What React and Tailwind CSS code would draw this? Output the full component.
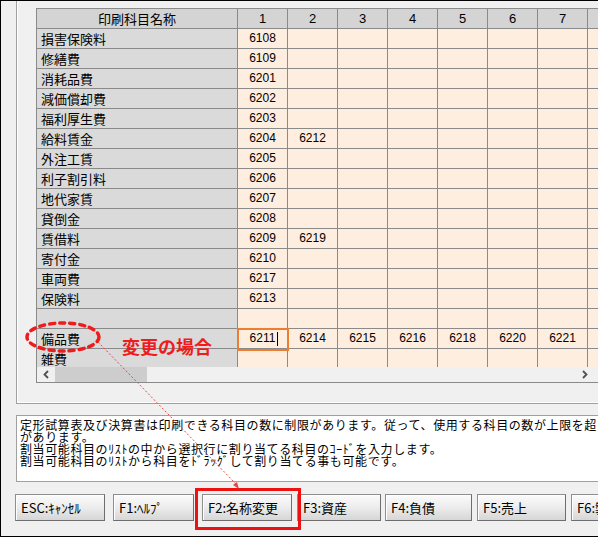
import React from "react";

const JP = { fontFamily: '"Noto Sans CJK JP", "Liberation Sans", sans-serif' };
const NUM = { fontFamily: '"Liberation Sans", "Noto Sans CJK JP", sans-serif' };

const rows = [
  ["損害保険料", ["6108"]],
  ["修繕費", ["6109"]],
  ["消耗品費", ["6201"]],
  ["減価償却費", ["6202"]],
  ["福利厚生費", ["6203"]],
  ["給料賃金", ["6204", "6212"]],
  ["外注工賃", ["6205"]],
  ["利子割引料", ["6206"]],
  ["地代家賃", ["6207"]],
  ["貸倒金", ["6208"]],
  ["賃借料", ["6209", "6219"]],
  ["寄付金", ["6210"]],
  ["車両費", ["6217"]],
  ["保険料", ["6213"]],
  ["", []],
  ["備品費", ["6211", "6214", "6215", "6216", "6218", "6220", "6221"]],
  ["雑費", []],
];

const COLS = 8;

function Row({ name, codes }) {
  return (
    <div className="flex h-[20px] shrink-0">
      <div
        className="w-[201px] shrink-0 h-full bg-[#dadada] border-r border-b border-[#8a8a8a] pl-[4px] text-[13px] leading-[20px] text-black"
        style={JP}
      >
        {name}
      </div>
      {Array.from({ length: COLS }).map((_, i) => (
        <div
          key={i}
          className="w-[50px] shrink-0 h-full bg-[#fdeee0] border-r border-b border-[#8a8a8a] text-center text-[12px] leading-[19px] text-black"
          style={NUM}
        >
          {codes[i] || ""}
        </div>
      ))}
    </div>
  );
}

function Btn({ label, w, ml }) {
  return (
    <div
      className="shrink-0 h-[27px] border border-[#8e8e8e] border-r-[#6e6e6e] border-b-[#6e6e6e] bg-gradient-to-b from-[#fbfbfb] via-[#ececec] to-[#d6d6d6] pl-[5px] text-[13px] leading-[25px] text-black whitespace-nowrap overflow-hidden shadow-[inset_1px_1px_0_#ffffff]"
      style={{ ...JP, width: w, marginLeft: ml }}
    >
      {label}
    </div>
  );
}

export default function App() {
  return (
    <div className="relative w-[598px] h-[537px] bg-[#f0f0f0] border-t border-l border-b border-black overflow-hidden flex flex-col">
      {/* group panel */}
      <div className="ml-[15px] h-[403px] shrink-0 border-l border-b border-[#a0a0a0]">
        <div className="h-full border-l border-b border-white pl-[18px] pt-[7px]">
          {/* grid */}
          <div className="w-[570px] h-[375px] border-l border-t border-b border-[#8a8a8a] bg-[#f0f0f0] flex flex-col overflow-hidden">
            <div className="h-[358px] overflow-hidden flex flex-col">
              <div className="flex h-[20px] shrink-0">
                <div
                  className="w-[201px] shrink-0 h-full bg-[#d4d4d4] border-r border-b border-[#8a8a8a] text-center text-[13px] leading-[19px] text-black"
                  style={JP}
                >
                  印刷科目名称
                </div>
                {Array.from({ length: COLS }).map((_, i) => (
                  <div
                    key={i}
                    className="w-[50px] shrink-0 h-full bg-[#d4d4d4] border-r border-b border-[#8a8a8a] text-center text-[13px] leading-[19px] text-black"
                    style={NUM}
                  >
                    {i < 7 ? i + 1 : ""}
                  </div>
                ))}
              </div>
              {rows.map(([n, c], i) => (
                <Row key={i} name={n} codes={c} />
              ))}
            </div>
            {/* horizontal scrollbar */}
            <div className="h-[15px] shrink-0 bg-[#f0f0f0] flex items-center relative">
              <div className="w-[17px] shrink-0 flex items-center justify-center">
                <svg width="8" height="9" viewBox="0 0 8 9">
                  <path d="M6 1 L2.5 4.5 L6 8" fill="none" stroke="#505050" strokeWidth="1.8" />
                </svg>
              </div>
              <div className="ml-[1px] w-[92px] h-[15px] bg-[#cdcdcd]" />
              <div className="absolute left-[544px] top-[3px] flex items-center">
                <svg width="8" height="9" viewBox="0 0 8 9">
                  <path d="M2 1 L5.5 4.5 L2 8" fill="none" stroke="#505050" strokeWidth="1.8" />
                </svg>
              </div>
            </div>
          </div>
        </div>
      </div>

      {/* message box */}
      <div className="ml-[15px] mt-[11px] h-[67px] shrink-0 border border-[#a0a0a0] border-r-0 bg-white pl-[3px] pt-[3px] overflow-hidden">
        <div className="text-[12px] tracking-[0.6px] leading-[12px] text-black whitespace-nowrap" style={JP}>
          <div>定形試算表及び決算書は印刷できる科目の数に制限があります。従って、使用する科目の数が上限を超える場合</div>
          <div>があります。</div>
          <div>割当可能科目のﾘｽﾄの中から選択行に割り当てる科目のｺｰﾄﾞを入力します。</div>
          <div>割当可能科目のﾘｽﾄから科目をﾄﾞﾗｯｸﾞして割り当てる事も可能です。</div>
        </div>
      </div>

      {/* buttons */}
      <div className="mt-[12px] flex">
        <Btn label="ESC:ｷｬﾝｾﾙ" w={90} ml={14} />
        <Btn label="F1:ﾍﾙﾌﾟ" w={81} ml={8} />
        <Btn label="F2:名称変更" w={90} ml={8} />
        <Btn label="F3:資産" w={84} ml={5} />
        <Btn label="F4:負債" w={87} ml={4} />
        <Btn label="F5:売上" w={89} ml={5} />
        <Btn label="F6:製造" w={90} ml={5} />
      </div>

      {/* overlays */}
      <div className="absolute left-[236px] top-[327px] w-[52px] h-[23px] border-2 border-[#ed7d31]" />
      <div className="absolute left-[276px] top-[331px] w-[1px] h-[14px] bg-black" />
      <div
        className="absolute left-[121px] top-[334px] text-[18px] leading-[22px] font-bold text-[#ee1c1c] whitespace-nowrap"
        style={JP}
      >
        変更の場合
      </div>
      <div className="absolute left-[194px] top-[487px] w-[106px] h-[42px] border-[3px] border-[#ee1111]" />
      <svg className="absolute left-0 top-0 pointer-events-none" width="598" height="537" viewBox="0 0 598 537">
        <ellipse cx="62" cy="336" rx="36" ry="14" fill="none" stroke="#ee1c1c" strokeWidth="3.5" strokeDasharray="5 5" strokeLinecap="round" />
        <line x1="97" y1="341" x2="236" y2="484" stroke="#e04848" strokeWidth="1" strokeDasharray="2 2" />
        <polygon points="238,488 232,484 236,481" fill="#e04848" />
      </svg>
    </div>
  );
}
